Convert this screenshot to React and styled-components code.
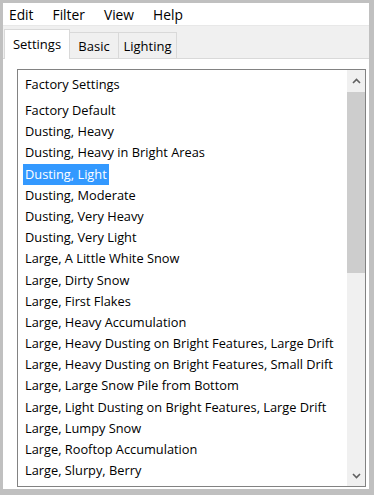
import styled, { createGlobalStyle } from "styled-components";

const GlobalStyle = createGlobalStyle`
  html, body {
    margin: 0;
    padding: 0;
    background: #c0c0c0;
  }
`;

const Frame = styled.div`
  width: 374px;
  height: 495px;
  box-sizing: border-box;
  padding: 3px 5px 6px 3px;
  background: #c0c0c0;
  display: flex;
  flex-direction: column;
  font-family: "Open Sans", "Liberation Sans", sans-serif;
  color: #000;
`;

const MenuBar = styled.div`
  height: 22px;
  background: #fff;
  display: flex;
  align-items: center;
  padding-left: 3px;
  border-bottom: 1px solid #e8e8e8;
  font-size: 13.8px;
`;

const MenuItem = styled.span`
  padding: 0 3px;
  margin-right: 13px;
`;

const TabStrip = styled.div`
  height: 32px;
  background: #f0f0f0;
  display: flex;
  align-items: flex-end;
  padding-left: 1px;
  position: relative;
  z-index: 1;
`;

const Tab = styled.div`
  box-sizing: border-box;
  font-size: 13px;
  display: flex;
  align-items: center;
  justify-content: center;
  border: 1px solid #d9d9d9;
  border-bottom: none;
  margin-right: -1px;
  background: ${(p) => (p.$active ? "#fff" : "#f0f0f0")};
  height: ${(p) => (p.$active ? "30px" : "26px")};
  width: ${(p) => p.$w}px;
  margin-bottom: ${(p) => (p.$active ? "-1px" : "0")};
  padding-bottom: ${(p) => (p.$active ? "2px" : "0")};
`;

const Panel = styled.div`
  flex: 1;
  background: #fff;
  border-top: 1px solid #d9d9d9;
  padding: 10px 3px 2px 14px;
  display: flex;
`;

const ListBox = styled.div`
  flex: 1;
  border: 1px solid #828282;
  display: flex;
  overflow: hidden;
`;

const ListContent = styled.div`
  flex: 1;
  padding: 4px 0 0 5px;
  font-size: 12.8px;
`;

const Header = styled.div`
  height: 21px;
  line-height: 21px;
  padding-left: 2px;
  margin-bottom: 5px;
`;

const Item = styled.div`
  height: 21.2px;
  line-height: 21px;
  padding: 0 2px;
  width: fit-content;
  white-space: nowrap;
  background: ${(p) => (p.$selected ? "#3399ff" : "transparent")};
  color: ${(p) => (p.$selected ? "#fff" : "#000")};
`;

const ScrollBar = styled.div`
  width: 18px;
  background: #f0f0f0;
  display: flex;
  flex-direction: column;
`;

const ArrowButton = styled.div`
  height: 21px;
  display: flex;
  align-items: center;
  justify-content: center;
`;

const Track = styled.div`
  flex: 1;
  padding: 1px 0;
  display: flex;
  flex-direction: column;
`;

const Thumb = styled.div`
  height: 181px;
  background: #cdcdcd;
`;

const Chevron = ({ up }) => (
  <svg width="9" height="6" viewBox="0 0 9 6">
    <path
      d={up ? "M1 5 L4.5 1.5 L8 5" : "M1 1 L4.5 4.5 L8 1"}
      fill="none"
      stroke="#606060"
      strokeWidth="1.6"
    />
  </svg>
);

const items = [
  "Factory Default",
  "Dusting, Heavy",
  "Dusting, Heavy in Bright Areas",
  "Dusting, Light",
  "Dusting, Moderate",
  "Dusting, Very Heavy",
  "Dusting, Very Light",
  "Large, A Little White Snow",
  "Large, Dirty Snow",
  "Large, First Flakes",
  "Large, Heavy Accumulation",
  "Large, Heavy Dusting on Bright Features, Large Drift",
  "Large, Heavy Dusting on Bright Features, Small Drift",
  "Large, Large Snow Pile from Bottom",
  "Large, Light Dusting on Bright Features, Large Drift",
  "Large, Lumpy Snow",
  "Large, Rooftop Accumulation",
  "Large, Slurpy, Berry",
];

export default function App() {
  return (
    <>
      <GlobalStyle />
      <Frame>
        <MenuBar>
          <MenuItem>Edit</MenuItem>
          <MenuItem>Filter</MenuItem>
          <MenuItem>View</MenuItem>
          <MenuItem>Help</MenuItem>
        </MenuBar>
        <TabStrip>
          <Tab $active $w={66}>Settings</Tab>
          <Tab $w={50}>Basic</Tab>
          <Tab $w={59}>Lighting</Tab>
        </TabStrip>
        <Panel>
          <ListBox>
            <ListContent>
              <Header>Factory Settings</Header>
              {items.map((it) => (
                <Item key={it} $selected={it === "Dusting, Light"}>
                  {it}
                </Item>
              ))}
            </ListContent>
            <ScrollBar>
              <ArrowButton>
                <Chevron up />
              </ArrowButton>
              <Track>
                <Thumb />
              </Track>
              <ArrowButton>
                <Chevron />
              </ArrowButton>
            </ScrollBar>
          </ListBox>
        </Panel>
      </Frame>
    </>
  );
}
